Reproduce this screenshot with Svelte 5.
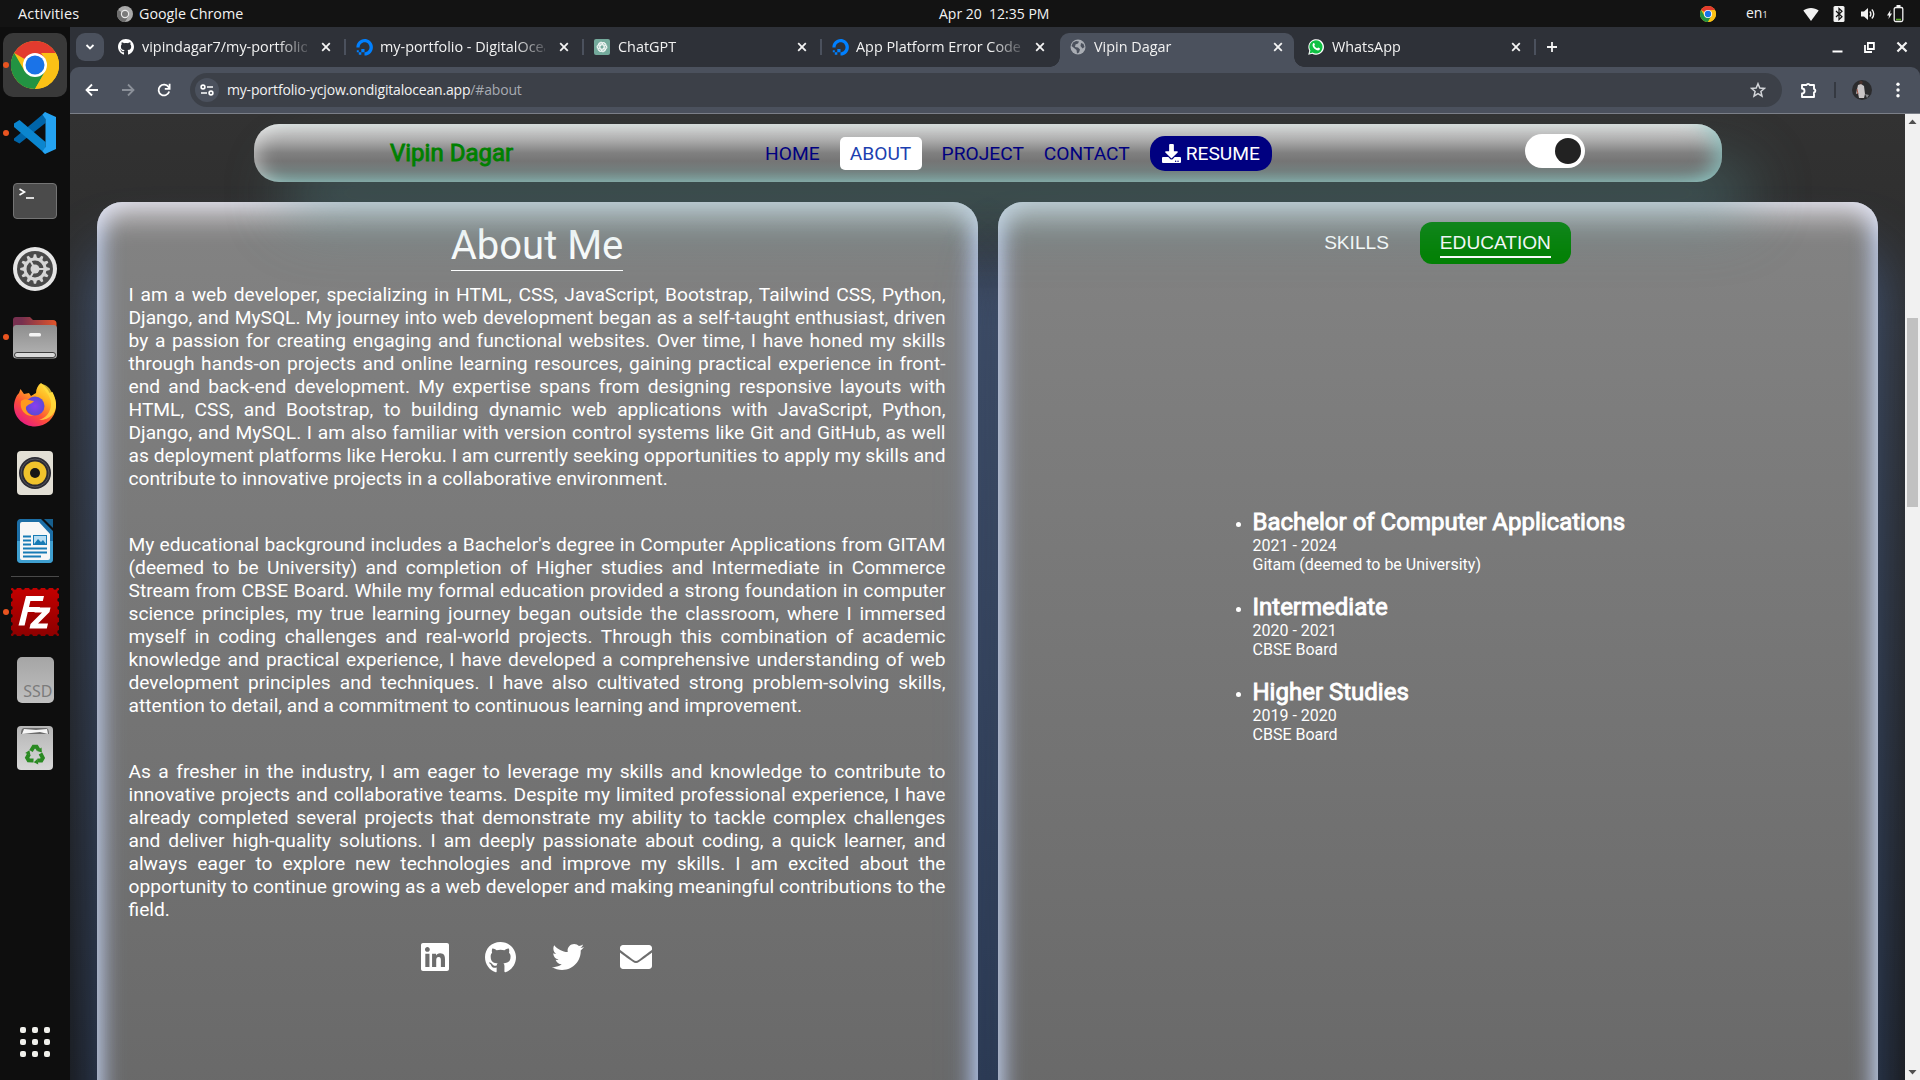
<script>
  const tabs = [
    { icon: 'github', title: 'vipindagar7/my-portfolio' },
    { icon: 'ocean', title: 'my-portfolio - DigitalOcean' },
    { icon: 'gpt', title: 'ChatGPT' },
    { icon: 'ocean', title: 'App Platform Error Codes' },
    { icon: 'globe', title: 'Vipin Dagar', active: true },
    { icon: 'whatsapp', title: 'WhatsApp' }
  ];
  const dock = [
    { id: 'chrome', running: true, focused: true },
    { id: 'code', running: true },
    { id: 'terminal' },
    { id: 'settings' },
    { id: 'files', running: true },
    { id: 'firefox' },
    { id: 'rhythmbox' },
    { id: 'writer' },
    { id: 'sep' },
    { id: 'filezilla', running: true },
    { id: 'ssd' },
    { id: 'trash' }
  ];
  const about = [
    'I am a web developer, specializing in HTML, CSS, JavaScript, Bootstrap, Tailwind CSS, Python, Django, and MySQL. My journey into web development began as a self-taught enthusiast, driven by a passion for creating engaging and functional websites. Over time, I have honed my skills through hands-on projects and online learning resources, gaining practical experience in front-end and back-end development. My expertise spans from designing responsive layouts with HTML, CSS, and Bootstrap, to building dynamic web applications with JavaScript, Python, Django, and MySQL. I am also familiar with version control systems like Git and GitHub, as well as deployment platforms like Heroku. I am currently seeking opportunities to apply my skills and contribute to innovative projects in a collaborative environment.',
    "My educational background includes a Bachelor's degree in Computer Applications from GITAM (deemed to be University) and completion of Higher studies and Intermediate in Commerce Stream from CBSE Board. While my formal education provided a strong foundation in computer science principles, my true learning journey began outside the classroom, where I immersed myself in coding challenges and real-world projects. Through this combination of academic knowledge and practical experience, I have developed a comprehensive understanding of web development principles and techniques. I have also cultivated strong problem-solving skills, attention to detail, and a commitment to continuous learning and improvement.",
    'As a fresher in the industry, I am eager to leverage my skills and knowledge to contribute to innovative projects and collaborative teams. Despite my limited professional experience, I have already completed several projects that demonstrate my ability to tackle complex challenges and deliver high-quality solutions. I am deeply passionate about coding, a quick learner, and always eager to explore new technologies and improve my skills. I am excited about the opportunity to continue growing as a web developer and making meaningful contributions to the field.'
  ];
  const education = [
    { name: 'Bachelor of Computer Applications', years: '2021 - 2024', place: 'Gitam (deemed to be University)' },
    { name: 'Intermediate', years: '2020 - 2021', place: 'CBSE Board' },
    { name: 'Higher Studies', years: '2019 - 2020', place: 'CBSE Board' }
  ];
  const teeth = [0, 30, 60, 90, 120, 150, 180, 210, 240, 270, 300, 330];
  const perforation = [4, 12, 20, 28, 36, 44];
</script>

{#snippet chromeLogo(size)}
  <svg width={size} height={size} viewBox="0 0 48 48">
    <circle cx="24" cy="24" r="24" fill="#fbc116" />
    <path d="M24 24 L3.2 12 A24 24 0 0 1 44.8 12 Z" fill="#e33b2e" />
    <path d="M3.2 12 A24 24 0 0 0 24 48 L34.4 30 L24 34 L13.6 30z" fill="#229342" />
    <path d="M24 48 L34.4 30 A12 12 0 0 0 34.4 18 L30 12H44.8A24 24 0 0 1 24 48z" fill="#fbc116" />
    <circle cx="24" cy="24" r="12" fill="#fff" />
    <circle cx="24" cy="24" r="9.5" fill="#1a73e8" />
  </svg>
{/snippet}

{#snippet octocat(size)}
  <svg width={size} height={size} viewBox="0 0 496 496" fill="#fff">
    <path d="M244.8 0C106.1 0 0 105.3 0 244c0 110.9 69.8 205.8 169.5 239.2 12.8 2.3 17.3-5.6 17.3-12.1 0-6.2-.3-40.4-.3-61.4 0 0-70 15-84.7-29.8 0 0-11.4-29.1-27.8-36.6 0 0-22.9-15.7 1.6-15.4 0 0 24.9 2 38.6 25.8 21.9 38.6 58.6 27.5 72.9 20.9 2.3-16 8.8-27.1 16-33.7-55.9-6.2-112.3-14.3-112.3-110.5 0-27.5 7.6-41.3 23.6-58.9-2.6-6.5-11.1-33.3 2.6-67.9 20.9-6.5 69 27 69 27 20-5.6 41.5-8.5 62.8-8.5s42.8 2.9 62.8 8.5c0 0 48.1-33.6 69-27 13.7 34.7 5.2 61.4 2.6 67.9 16 17.7 25.8 31.5 25.8 58.9 0 96.5-58.9 104.2-114.8 110.5 9.2 7.9 17 22.9 17 46.4 0 33.7-.3 75.4-.3 83.6 0 6.5 4.6 14.4 17.3 12.1C428.2 449.8 496 354.9 496 244 496 105.3 383.5 0 244.8 0z" />
  </svg>
{/snippet}

{#snippet favicon(kind)}
  {#if kind === 'github'}
    {@render octocat(16)}
  {:else if kind === 'ocean'}
    <svg width="17" height="17" viewBox="0 0 17 17" fill="#0080ff">
      <path d="M8.5 16.6v-3.3c3.400 0 6-3.300 4.700-6.900A4.700 4.700 0 0 0 10.400 3.600C6.900 2.300 3.600 5 3.600 8.400H.4C.4 3 5.600-1.300 11.300.5c2.500.8 4.400 2.700 5.200 5.200C18.200 11.400 14 16.600 8.500 16.600z" />
      <path d="M5.300 10.100h3.200v3.200H5.300zM2.800 13.300h2.500v2.500H2.800zM.8 11.300h2v2h-2z" />
    </svg>
  {:else if kind === 'gpt'}
    <svg width="16" height="16" viewBox="0 0 16 16" fill="none" stroke="#fff" stroke-width="0.8">
      <rect width="16" height="16" rx="2" fill="#74aa9c" stroke="none" />
      {#each [0, 60, 120, 180, 240, 300] as a}
        <path d="M8 5.700 10.700 7.300V10.700a2.200 2.200 0 0 0 2-3.200L9.400 3.200" transform="rotate({a} 8 8)" />
      {/each}
    </svg>
  {:else if kind === 'globe'}
    <svg width="16" height="16" viewBox="0 0 16 16">
      <circle cx="8" cy="8" r="7.500" fill="#a9adb4" />
      <path d="M3 3.500 6 2l3 .5-1 2-2.500 1L5 8l3 .5 2 2-1 3-2 1L6.500 11 4 9 1.500 7zM11 4l2.500 1 1 3-2 1.500L10.500 7z" fill="#4b515d" />
    </svg>
  {:else}
    <svg width="16" height="16" viewBox="0 0 16 16">
      <path d="M.2 15.800 1.300 11.700A7.800 7.800 0 1 1 4.200 14.700z" fill="#fff" />
      <path d="M1.600 14.400 2.400 11.500A6.600 6.600 0 1 1 4.600 13.600z" fill="#0fc143" />
      <path d="M5.200 4.200c.4-.4.900-.3 1.100.1l.6 1.300c.1.400-.6.900-.6 1.200.5 1.200 1.500 2 2.700 2.500.4.100.8-.9 1.200-.8l1.500.7c.5.300.1 1.300-.3 1.700-1.200 1-3 .3-4.600-.8C5 8.600 3.700 6 5.200 4.200z" fill="#fff" />
    </svg>
  {/if}
{/snippet}

{#snippet cross(size)}
  <svg width={size} height={size} viewBox="0 0 10 10" stroke="#f4f4f4" stroke-width="1.800"><path d="M1.200 1.200l7.600 7.600M8.800 1.200l-7.600 7.600" /></svg>
{/snippet}

{#snippet appIcon(id)}
  {#if id === 'chrome'}
    {@render chromeLogo(48)}
  {:else if id === 'code'}
    <svg width="48" height="48" viewBox="0 0 48 48">
      <path d="M3 29.500 34.500 3v11L8.500 34.500 3 31.500z" fill="#0065a9" />
      <path d="M3 14.500 8.500 11 34.500 33v12L3 18z" fill="#0b86cf" />
      <path d="M34 3 45 8v32l-11 5-2.500-2.500 3-4.500V10L31.500 5.500z" fill="#24a3f2" />
    </svg>
  {:else if id === 'terminal'}
    <svg width="48" height="48" viewBox="0 0 48 48">
      <rect x="2.500" y="6.500" width="43" height="35" rx="3.500" fill="#4b4b4b" stroke="#747474" />
      <path d="M8.500 12l5 3-5 3" fill="none" stroke="#fff" stroke-width="1.600" />
      <path d="M15 21h8" stroke="#fff" stroke-width="1.600" />
    </svg>
  {:else if id === 'settings'}
    <svg width="48" height="48" viewBox="0 0 48 48">
      <circle cx="24" cy="24" r="22" fill="#e6e6e6" />
      <circle cx="24" cy="24" r="18" fill="#4a4a4a" />
      {#each teeth as a}
        <path d="M22 13l.9-3.800h2.200l.9 3.800z" fill="#d5d5d5" transform="rotate({a} 24 24)" />
      {/each}
      <circle cx="24" cy="24" r="10" fill="none" stroke="#d5d5d5" stroke-width="3" />
      <path d="M24 24H34M24 24l-5-9M24 24l-5 9" stroke="#d5d5d5" stroke-width="2" />
      <circle cx="24" cy="24" r="4.500" fill="#d5d5d5" />
    </svg>
  {:else if id === 'files'}
    <svg width="48" height="48" viewBox="0 0 48 48">
      <defs>
        <linearGradient id="folderBack"><stop offset="0.200" stop-color="#77304f" /><stop offset="1" stop-color="#e2552a" /></linearGradient>
        <linearGradient id="folderFront" x2="0" y2="1"><stop offset="0" stop-color="#8e8e8e" /><stop offset="1" stop-color="#b5b5b5" /></linearGradient>
      </defs>
      <path d="M2 20V7a3 3 0 0 1 3-3h14l3 3h20a3.500 3.500 0 0 1 3.500 3.500V20z" fill="url(#folderBack)" />
      <rect x="2" y="12" width="44" height="33.500" rx="3.500" fill="url(#folderFront)" />
      <rect x="3.500" y="39.500" width="41" height="5" rx="2.500" fill="#d9d9d9" stroke="#3d3d3d" />
      <rect x="18" y="20" width="12" height="3.500" rx="1.500" fill="#f4f4f4" />
    </svg>
  {:else if id === 'firefox'}
    <svg width="48" height="48" viewBox="0 0 48 48">
      <defs>
        <linearGradient id="fox" x1="0.900" y1="0" x2="0.200" y2="1"><stop offset="0" stop-color="#fff04a" /><stop offset="0.350" stop-color="#ffb01f" /><stop offset="0.650" stop-color="#ff4f38" /><stop offset="1" stop-color="#e3158c" /></linearGradient>
        <radialGradient id="foxCore"><stop offset="0" stop-color="#8b3df0" /><stop offset="1" stop-color="#5b4ad6" /></radialGradient>
      </defs>
      <path d="M30 2c4 3 7 6 8.500 10l3-1C44 16 45.500 21 45 26 44 37 35 45.500 24 45.500S3.500 37 3 26c0-6 2-11 5-14l1.500-4 3.500 5 5-1 2 3 5-3c0-4 2-8 5-10z" fill="url(#fox)" />
      <circle cx="24" cy="25" r="9.500" fill="url(#foxCore)" />
      <path d="M10 20c5-4 9 0 13 0-2 3-6 3-8 6-1 4 3 8 8 9-8 1-15-6-13-15z" fill="#ff9a1f" />
      <path d="M31 3c1 7 9 10 9 20 0 8-5 14-12 16 12 0 17-8 17-15 0-6-3-11-5-14-1-3-5-6-9-7z" fill="#ffdc3d" opacity="0.800" />
    </svg>
  {:else if id === 'rhythmbox'}
    <svg width="48" height="48" viewBox="0 0 48 48">
      <rect x="6" y="2" width="36" height="44" rx="4" fill="#e2dfd5" />
      <circle cx="24" cy="24" r="16" fill="#2b2b33" />
      <circle cx="24" cy="24" r="14" fill="none" stroke="#55555c" />
      <circle cx="24" cy="24" r="11.500" fill="#f0c32c" />
      <circle cx="24" cy="24" r="5" fill="#161616" />
    </svg>
  {:else if id === 'writer'}
    <svg width="48" height="48" viewBox="0 0 48 48">
      <path d="M9 2h21l12 12v28a4 4 0 0 1-4 4H10a4 4 0 0 1-4-4V6a4 4 0 0 1 3-4z" fill="#1c6ea6" />
      <path d="M6 24h36v18a4 4 0 0 1-4 4H10a4 4 0 0 1-4-4z" fill="#3f9fd0" />
      <path d="M33 2h9v9z" fill="#17608f" />
      <path d="M11 5h17l11 12v24a2 2 0 0 1-2 2H11a2 2 0 0 1-2-2V7a2 2 0 0 1 2-2z" fill="#f7f7f7" />
      <path d="M12 19.500h8M12 23.500h8M12 27.500h8M12 31.500h24M12 35.500h24M12 39.500h18" stroke="#177bb5" stroke-width="1.800" />
      <rect x="22.500" y="18.500" width="13" height="9" fill="#b8ddf2" stroke="#177bb5" />
      <path d="M23 27l4-5 3 3 2-2 3 4z" fill="#177bb5" />
    </svg>
  {:else if id === 'filezilla'}
    <svg width="48" height="48" viewBox="0 0 48 48">
      <defs><linearGradient id="stamp" x2="0" y2="1"><stop offset="0" stop-color="#c40000" /><stop offset="1" stop-color="#8d0000" /></linearGradient></defs>
      <rect width="48" height="48" rx="1" fill="url(#stamp)" />
      {#each perforation as p}
        <g fill="#0e0e0e"><circle cx={p} cy="-0.200" r="1.900" /><circle cx={p} cy="48.200" r="1.900" /><circle cx="-0.200" cy={p} r="1.900" /><circle cx="48.200" cy={p} r="1.900" /></g>
      {/each}
      <path d="M15 8H33L31.800 13H19.400L18 19H29L27.800 24H16.800L13.600 37.500H7.500z" fill="#fff" />
      <path d="M24.500 19.500H39.500L38.500 24 27 35.500H37L35.800 40.500H18.500L19.500 36 31 24.500H23.500z" fill="#fff" />
    </svg>
  {:else if id === 'ssd'}
    <span class="ssd">SSD</span>
  {:else if id === 'trash'}
    <svg width="48" height="48" viewBox="0 0 48 48">
      <defs><linearGradient id="bin" x2="0" y2="1"><stop offset="0" stop-color="#b5b5b5" /><stop offset="1" stop-color="#d8d8d8" /></linearGradient></defs>
      <rect x="6" y="2" width="36" height="44" rx="4" fill="url(#bin)" />
      <path d="M10 10c0-4 1-6 3-6h22c2 0 3 2 3 6z" fill="#6d6d6d" />
      <path d="M11 10l2-5 12 1 11-1 1 5-8-2z" fill="#f6f6f6" />
      <g fill="none" stroke="#2a8a22" stroke-width="4">
        {#each [0, 120, 240] as a}
          <g transform="rotate({a} 24 31)"><path d="M20 27l2.600-4.200h3l2 3.200" /><path d="M30.500 23.500l.4 5-5-1.600z" fill="#2a8a22" stroke="none" /></g>
        {/each}
      </g>
    </svg>
  {/if}
{/snippet}

<div class="desktop">
  <header class="topbar">
    <span class="activities">Activities</span>
    <span class="appmenu">
      <svg width="16" height="16" viewBox="0 0 16 16">
        <circle cx="8" cy="8" r="8" fill="#a9a9a9" /><path d="M8 8 1 4A8 8 0 0 0 8 16l3.500-6z" fill="#6d6d6d" /><circle cx="8" cy="8" r="4.200" fill="#e9e9e9" /><circle cx="8" cy="8" r="3" fill="#7a7a7a" />
      </svg>
      <span class="appname">Google Chrome</span>
    </span>
    <span class="clock">Apr 20&nbsp; 12:35 PM</span>
    <span class="tray">
      <span class="t-chrome">{@render chromeLogo(16)}</span>
      <span class="lang">en<small>1</small></span>
      <svg class="t-wifi" width="16" height="16" viewBox="0 0 16 16"><path d="M.3 4.500C4.600 1 11.400 1 15.700 4.500L8 15z" fill="#f2f2f2" /></svg>
      <svg class="t-bt" width="12" height="16" viewBox="0 0 12 16"><rect x=".5" width="11" height="16" rx="1.500" fill="#f2f2f2" /><path d="M3 5l6 5.700L6 13.500v-11L9 5.300 3 11" fill="none" stroke="#131313" stroke-width="1.200" /></svg>
      <svg class="t-vol" width="16" height="16" viewBox="0 0 16 16"><path d="M1 5.500h3L8 2v12L4 10.500H1z" fill="#f2f2f2" /><path d="M9.800 5.500a3.500 3.500 0 0 1 0 5M11.800 3.500a6.200 6.200 0 0 1 0 9" fill="none" stroke="#f2f2f2" stroke-width="1.400" /></svg>
      <svg width="17" height="18" viewBox="0 0 17 18"><path d="M3.500 5 0 10.500h2L1.500 14 5 8.500H3z" fill="#f2f2f2" /><rect x="7.200" y="2.500" width="8.600" height="14" rx="1.500" fill="none" stroke="#f2f2f2" stroke-width="1.300" /><path d="M9.500 0h4v2.500h-4z" fill="#f2f2f2" /><path d="M9 14.500h5" stroke="#5fae2c" stroke-width="1.500" /></svg>
    </span>
  </header>

  <div class="body">
    <nav class="dock">
      {#each dock as item}
        {#if item.id === 'sep'}
          <hr />
        {:else}
          <div class="tile" class:focused={item.focused} class:running={item.running}>{@render appIcon(item.id)}</div>
        {/if}
      {/each}
      <div class="apps">{#each Array(9) as _}<i></i>{/each}</div>
    </nav>

    <main class="browser">
      <div class="tabstrip">
        <span class="search"><svg width="10" height="8" viewBox="0 0 10 8"><path d="M1.500 2 5 5.500 8.500 2" fill="none" stroke="#fff" stroke-width="1.800" /></svg></span>
        {#each tabs as tab}
          <div class="tab" class:active={tab.active}>
            <span class="fav">{@render favicon(tab.icon)}</span>
            <span class="title">{tab.title}</span>
            {@render cross(10)}
          </div>
        {/each}
        <svg class="plus" width="12" height="12" viewBox="0 0 12 12" stroke="#f4f4f4" stroke-width="1.800"><path d="M6 1v10M1 6h10" /></svg>
        <span class="winctl">
          <svg width="11" height="12" viewBox="0 0 11 12"><path d="M.5 10.500h10" stroke="#fff" stroke-width="2" /></svg>
          <svg width="11" height="11" viewBox="0 0 11 11" fill="none" stroke="#fff" stroke-width="1.800"><path d="M3.900 1h6v6h-6zM1 3v7h7" /></svg>
          {@render cross(12)}
        </span>
      </div>

      <div class="toolbar">
        <svg class="back" width="14" height="14" viewBox="0 0 14 14" fill="none" stroke="#fff" stroke-width="1.800"><path d="M13 7H2M7 1.500 1.500 7 7 12.500" /></svg>
        <svg class="fwd" width="14" height="14" viewBox="0 0 14 14" fill="none" stroke="#8b9099" stroke-width="1.800"><path d="M1 7h11M7 1.500 12.500 7 7 12.500" /></svg>
        <svg class="reload" width="14" height="14" viewBox="0 0 14 14" fill="none" stroke="#fff" stroke-width="1.800"><path d="M12.200 8.500A5.400 5.400 0 1 1 11.500 4L12.500 5.500M12.600.8v5H7.800" /></svg>
        <div class="omnibox">
          <span class="site"><svg width="14" height="12" viewBox="0 0 14 12" fill="none" stroke="#fff" stroke-width="1.600"><circle cx="3" cy="3" r="1.900" /><path d="M7 3h6M1 9h6" /><circle cx="11" cy="9" r="1.900" /></svg></span>
          <span class="url">my-portfolio-ycjow.ondigitalocean.app<em>/#about</em></span>
          <svg width="16" height="16" viewBox="0 0 16 16" fill="none" stroke="#d3d5d9" stroke-width="1.500"><path d="M8 1.700 9.800 6l4.700.4-3.600 3.100 1.100 4.600L8 11.700l-4 2.400 1.100-4.600L1.500 6.400 6.200 6z" /></svg>
        </div>
        <svg class="ext" width="17" height="18" viewBox="0 0 17 18" fill="none" stroke="#fff" stroke-width="1.900"><path d="M2 4h4.500a1.700 1.700 0 0 1 3.200 0H14v4a1.800 1.800 0 0 1 0 3.500V16H2v-3.500a2.500 2.500 0 0 0 0-5z" stroke-linejoin="round" /></svg>
        <span class="bar"></span>
        <svg class="avatar" width="20" height="20" viewBox="0 0 20 20"><circle cx="10" cy="10" r="10" fill="#2b2b2d" /><path d="M6 5l3-1 3 2 1 8-1 4H7l-1-5-2 1z" fill="#c9c5c6" /><circle cx="9" cy="2.500" r="1.700" fill="#4a332e" /><path d="M5 9l1 5" stroke="#a65a4c" /><path d="M13 14l4 1-2 3z" fill="#85868a" /></svg>
        <svg width="4" height="16" viewBox="0 0 4 16" fill="#fff"><circle cx="2" cy="2.300" r="1.700" /><circle cx="2" cy="8" r="1.700" /><circle cx="2" cy="13.700" r="1.700" /></svg>
      </div>

      <div class="viewport">
        <div class="page">
          <div class="nav">
            <strong class="brand">Vipin Dagar</strong>
            <div class="links">
              <a class="home" href="#home">HOME</a>
              <a class="current" href="#about">ABOUT</a>
              <a href="#project">PROJECT</a>
              <a href="#contact">CONTACT</a>
              <a class="resume" href="#resume">
                <svg width="19" height="19" viewBox="0 0 512 512" fill="#fff"><path d="M216 0h80c13.300 0 24 10.700 24 24v168h87.700c17.800 0 26.700 21.500 14.100 34.100L269.700 378.300c-7.500 7.500-19.800 7.500-27.300 0L90.100 226.100c-12.600-12.600-3.700-34.100 14.100-34.100H192V24c0-13.300 10.700-24 24-24zm296 376v112c0 13.300-10.700 24-24 24H24c-13.300 0-24-10.700-24-24V376c0-13.300 10.700-24 24-24h146.700l49 49c20.100 20.100 52.500 20.100 72.600 0l49-49H488c13.300 0 24 10.700 24 24zm-124 88c0-11-9-20-20-20s-20 9-20 20 9 20 20 20 20-9 20-20zm64 0c0-11-9-20-20-20s-20 9-20 20 9 20 20 20 20-9 20-20z" /></svg>
                RESUME
              </a>
            </div>
            <span class="switch"><i></i></span>
          </div>

          <div class="cards">
            <section class="card">
              <h1>About Me</h1>
              {#each about as text}<p>{text}</p>{/each}
              <div class="social">
                <svg width="28" height="32" viewBox="0 0 448 512" fill="#fff"><path d="M416 32H31.900C14.300 32 0 46.500 0 64.300v383.400C0 465.500 14.300 480 31.900 480H416c17.600 0 32-14.500 32-32.300V64.300c0-17.800-14.400-32.300-32-32.300zM135.400 416H69V202.200h66.500V416zm-33.200-243c-21.300 0-38.500-17.300-38.500-38.500S80.900 96 102.200 96c21.200 0 38.500 17.300 38.500 38.500 0 21.300-17.200 38.500-38.500 38.500zm282.100 243h-66.400V312c0-24.800-.5-56.700-34.500-56.700-34.600 0-39.900 27-39.900 54.900V416h-66.400V202.200h63.700v29.200h.9c8.900-16.800 30.600-34.500 62.900-34.500 67.200 0 79.700 44.300 79.700 101.900V416z" /></svg>
                {@render octocat(31)}
                <svg width="32" height="32" viewBox="0 0 512 512" fill="#fff"><path d="M459.370 151.716c.325 4.548.325 9.097.325 13.645 0 138.720-105.583 298.558-298.558 298.558-59.452 0-114.680-17.219-161.137-47.106 8.447.974 16.568 1.299 25.340 1.299 49.055 0 94.213-16.568 130.274-44.832-46.132-.975-84.792-31.188-98.112-72.772 6.498.974 12.995 1.624 19.818 1.624 9.421 0 18.843-1.300 27.614-3.573-48.081-9.747-84.143-51.980-84.143-102.985v-1.299c13.969 7.797 30.214 12.670 47.431 13.319-28.264-18.843-46.781-51.005-46.781-87.391 0-19.492 5.197-37.360 14.294-52.954 51.655 63.675 129.300 105.258 216.365 109.807-1.624-7.797-2.599-15.918-2.599-24.040 0-57.828 46.782-104.934 104.934-104.934 30.213 0 57.502 12.670 76.670 33.137 23.715-4.548 46.456-13.320 66.599-25.340-7.798 24.366-24.366 44.833-46.132 57.827 21.117-2.273 41.584-8.122 60.426-16.243-14.292 20.791-32.161 39.308-52.628 54.253z" /></svg>
                <svg width="32" height="32" viewBox="0 0 512 512" fill="#fff"><path d="M502.300 190.800c3.900-3.100 9.700-.2 9.700 4.700V400c0 26.500-21.500 48-48 48H48c-26.500 0-48-21.500-48-48V195.600c0-5 5.700-7.800 9.700-4.700 22.400 17.400 52.100 39.500 154.100 113.600 21.100 15.400 56.700 47.800 92.200 47.600 35.700.3 72-32.800 92.300-47.600 102-74.100 131.600-96.300 154-113.700zM256 320c23.200.4 56.600-29.200 73.400-41.400 132.700-96.300 142.800-104.700 173.400-128.700 5.800-4.500 9.200-11.500 9.200-18.900v-19c0-26.500-21.500-48-48-48H48c-26.500 0-48 21.500-48 48v19c0 7.400 3.400 14.300 9.200 18.900 30.600 23.900 40.700 32.400 173.400 128.700 16.800 12.200 50.200 41.800 73.400 41.400z" /></svg>
              </div>
            </section>

            <section class="card right">
              <div class="switcher">
                <span>SKILLS</span>
                <span class="on"><u>EDUCATION</u></span>
              </div>
              <ul>
                {#each education as e}
                  <li><h2>{e.name}</h2><div>{e.years}</div><div>{e.place}</div></li>
                {/each}
              </ul>
            </section>
          </div>
        </div>
        <div class="scroll">
          <svg width="15" height="16" viewBox="0 0 15 16"><path d="M3.500 10h8L7.500 5.500z" fill="#505050" /></svg>
          <span class="thumb"></span>
          <svg class="down" width="15" height="16" viewBox="0 0 15 16"><path d="M3.500 6h8L7.500 10.500z" fill="#505050" /></svg>
        </div>
      </div>
    </main>
  </div>
</div>

<style>
  :global(body) { margin: 0; overflow: hidden; background: #0e0e0e; }
  * { box-sizing: border-box; }
  svg { display: block; flex: none; }
  .desktop { width: 1920px; height: 1080px; overflow: hidden; display: flex; flex-direction: column; font-family: "Open Sans", "Noto Sans", sans-serif; color: #f2f2f2; }
  .topbar { height: 27px; flex: none; background: #131313; display: grid; grid-template-columns: 117px 822px 200px 1fr; align-items: center; font-size: 14px; line-height: 26px; white-space: pre; }
  .activities { padding-left: 18px; font-size: 14.500px; letter-spacing: 0.150px; }
  .appmenu { display: flex; align-items: center; }
  .appname { margin-left: 6px; font-size: 14.300px; }
  .tray { display: flex; align-items: center; justify-content: flex-end; padding-right: 16px; }
  .t-chrome { margin-right: 30px; }
  .lang { width: 22px; font-size: 14px; margin-right: 35px; }
  .lang small { font-size: 9px; }
  .t-wifi { margin-right: 14px; }
  .t-bt { margin-right: 15px; }
  .t-vol { margin-right: 11px; }

  .body { flex: 1; display: flex; min-height: 0; }
  .dock { width: 70px; flex: none; background: #0e0e0e; padding: 6px 3px 0; display: flex; flex-direction: column; }
  .tile { position: relative; width: 64px; height: 64px; flex: none; margin-bottom: 4px; border-radius: 10px; display: grid; place-items: center; }
  .focused { background: #393939; }
  .running::before { content: ""; position: absolute; left: 0; top: 29px; width: 6px; height: 6px; border-radius: 50%; background: #e95420; }
  hr { width: 48px; height: 1px; flex: none; border: 0; background: #4a4a4a; margin: -1px auto 3px; }
  .ssd { width: 37px; height: 46px; border-radius: 5px; background: linear-gradient(#a5a5a5, #c0c0c0); color: #7b7b7b; font: 16px/68px "Noto Sans", sans-serif; text-align: right; padding-right: 1px; }
  .apps { margin: auto auto 23px; display: grid; grid-template-columns: repeat(3, 6px); gap: 6px; }
  .apps i { width: 6px; height: 6px; border-radius: 2px; background: #f0f0ec; }

  .browser { flex: 1; min-width: 0; display: flex; flex-direction: column; background: #2e3138; }
  .tabstrip { height: 40px; flex: none; padding-left: 6px; display: flex; align-items: flex-end; font-size: 14.400px; }
  .search { width: 28px; height: 28px; margin: 0 3px 6px 0; border-radius: 9px; background: #4b515d; display: grid; place-items: center; }
  .tab { position: relative; width: 238px; height: 34px; padding: 0 14px 6px 11px; display: flex; align-items: center; }
  .tab::after { content: ""; position: absolute; right: -1px; top: 6px; width: 2px; height: 16px; background: #4b515d; }
  .tab.active { background: #4b515d; width: 234px; margin: 0 3px 0 1px; border-radius: 9px 9px 0 0; padding: 0 11px 6px 10px; }
  .tab:has(+ .active)::after, .active::after { display: none; }
  .active::before { content: ""; position: absolute; left: -10px; right: -10px; bottom: 0; height: 10px; background: radial-gradient(circle at 0 0, transparent 9.500px, #4b515d 10px) 0 0 / 10px 10px no-repeat, radial-gradient(circle at 100% 0, transparent 9.500px, #4b515d 10px) 100% 0 / 10px 10px no-repeat; }
  .fav { width: 24px; flex: none; }
  .title { flex: 1; min-width: 0; overflow: hidden; white-space: nowrap; line-height: 20px; margin-right: 14px; mask-image: linear-gradient(90deg, #000 135px, transparent 172px); }
  .plus { margin: 0 auto 14px 11px; }
  .winctl { display: flex; align-items: center; gap: 21px; padding: 0 12px 14px 0; }

  .toolbar { height: 47px; flex: none; background: #4b515d; border-bottom: 1px solid #7b7f88; border-radius: 9px 9px 0 0; display: flex; align-items: center; padding-left: 15px; padding-right: 20px; }
  .fwd { margin-left: 22px; }
  .reload { margin: 0 19px 0 22px; }
  .omnibox { width: 1592px; height: 34px; border-radius: 17px; background: #3c4048; display: flex; align-items: center; padding: 0 16px 0 5px; }
  .site { width: 24px; height: 24px; border-radius: 50%; background: #4b515d; display: grid; place-items: center; margin-right: 8px; }
  .url { flex: 1; font-size: 14px; letter-spacing: -0.180px; line-height: 18px; margin-top: -1px; }
  .url em { font-style: normal; color: #a7abb2; }
  .ext { margin-left: 18px; }
  .bar { width: 2px; height: 16px; background: #353941; margin: 0 16px 0 17px; }
  .avatar { margin-right: 24px; }

  .viewport { flex: 1; min-height: 0; display: flex; }
  .page { flex: 1; min-width: 0; overflow: hidden; padding: 10px 27px 0; background: linear-gradient(#323232, #161616); font-family: Roboto, sans-serif; color: #fff; }
  .nav { position: relative; z-index: 1; width: 1468px; height: 58px; margin: 0 auto 20px 157px; border-radius: 25px; display: flex; align-items: center; background: linear-gradient(#dcdcdc, #b0b0b0 26%, #808080 50%, #757575 64%, #737f7e 80%, #779d9a); box-shadow: inset 14px 0 20px -10px rgba(255, 255, 255, 0.500), inset -18px 0 20px -10px rgba(140, 200, 198, 0.750), 30px 40px 60px rgba(95, 158, 160, 0.380); }
  .brand { width: 375px; padding-left: 136px; font-size: 24px; font-weight: 400; -webkit-text-stroke: 0.900px; color: green; margin-top: -1px; }
  .links { display: flex; align-items: center; font-size: 19.200px; }
  .links a { color: navy; text-decoration: none; margin-right: 20px; }
  .links .home { margin-left: 136px; }
  .links .current { background: #fff; color: #1c3fb0; border-radius: 5px; height: 33px; line-height: 34px; width: 82px; text-align: center; }
  .links .resume { background: navy; color: #fff; height: 35px; width: 122px; border-radius: 15px; display: flex; align-items: center; gap: 5px; padding-left: 12px; margin: 0; }
  .switch { width: 60px; height: 34px; border-radius: 17px; background: #fff; padding: 4px; margin: -4px 137px 0 auto; display: flex; justify-content: flex-end; }
  .switch i { width: 26px; height: 26px; border-radius: 50%; background: #222; }

  .cards { display: grid; grid-template-columns: 881px 880px; gap: 20px; }
  .card { height: 1000px; border-radius: 25px; padding: 20px 32.500px 0 31.500px; background: linear-gradient(#838383, #696969 900px); box-shadow: inset 0 26px 28px -12px rgba(240, 236, 242, 0.800), inset 14px 0 22px -9px rgba(190, 212, 255, 0.820), inset -14px 0 22px -9px rgba(190, 212, 255, 0.820), 0 50px 60px rgba(100, 149, 237, 0.430); }
  h1 { width: fit-content; margin: 0 auto 12px; font-size: 40px; font-weight: 400; line-height: 48px; border-bottom: 1px solid #fff; }
  p { margin: 0 0 43px; font-size: 19.200px; line-height: 23px; text-align: justify; }
  .social { display: flex; justify-content: center; align-items: center; gap: 36px; margin: -23px 0 0 -1px; height: 32px; }
  .right { display: flex; flex-direction: column; align-items: center; }
  .switcher { display: flex; align-items: center; gap: 31px; font: 19.100px "Liberation Sans", sans-serif; margin-left: 20px; }
  .on { width: 151px; height: 42px; border-radius: 12px; background: #008000; display: grid; place-items: center; }
  u { text-decoration: none; border-bottom: 2px solid #fff; height: 26px; margin-top: 4px; line-height: 22px; }
  ul { width: 403px; margin: 244px 0 0 1px; padding: 0 0 0 16px; }
  li { margin-bottom: 19px; font-size: 16px; line-height: 19px; }
  h2 { margin: 0; font-size: 24px; line-height: 28px; font-weight: 400; -webkit-text-stroke: 0.900px; white-space: nowrap; }

  .scroll { width: 15px; flex: none; background: #f1f1f1; display: flex; flex-direction: column; }
  .thumb { width: 11px; height: 189px; margin: 188px auto 0 2px; background: #c1c1c1; }
  .down { margin-top: auto; }
</style>
